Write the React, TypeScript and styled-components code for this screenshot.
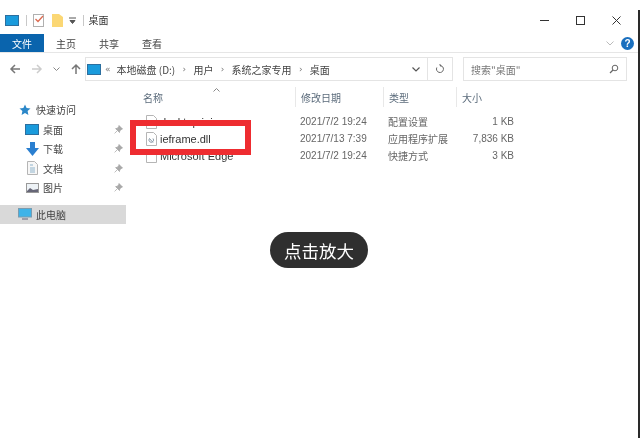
import React from "react";
import styled, { createGlobalStyle } from "styled-components";

const Global = createGlobalStyle`
  html, body { margin: 0; padding: 0; background: #fff; }
  body { font-family: "Noto Sans CJK SC", "Liberation Sans", sans-serif; }
`;
const Win = styled.div`
  position: relative; width: 640px; height: 438px; overflow: hidden; background: #fff;
  color: #333; font-size: 10px; filter: blur(0.35px);
`;
const EdgeLine = styled.div`
  position: absolute; right: 0; top: 10px; bottom: 0; width: 2px; background: #2a2a2a;
`;
const TitleBar = styled.div`
  height: 34px; display: flex; align-items: flex-end; padding: 0 0 7px 5px; box-sizing: border-box;
`;
const QuickIcons = styled.div`display: flex; align-items: center; gap: 6.5px; height: 14px;`;
const Sep = styled.div`width: 1px; height: 11px; background: #c8c8c8;`;
const TitleText = styled.span`margin-left: 5px; font-size: 10px; line-height: 14px; color: #333;`;
const WinButtons = styled.div`
  margin-left: auto; display: flex; align-items: center; gap: 27px; padding-right: 19px; height: 14px;
`;
const Ribbon = styled.div`
  height: 19px; box-sizing: border-box; display: flex; align-items: stretch; border-bottom: 1px solid #e6e6e6;
`;
const FileTab = styled.div`
  width: 44px; background: #0a64ad; color: #fff; display: flex; align-items: center; justify-content: center;
  font-size: 10px;
`;
const Tab = styled.div<{ $w: number }>`
  width: ${p => p.$w}px; display: flex; align-items: center; justify-content: center; font-size: 10px; color: #444;
`;
const RibbonEnd = styled.div`
  margin-left: auto; display: flex; align-items: center; gap: 7px; padding-right: 6px;
`;
const Help = styled.div`
  width: 13px; height: 13px; border-radius: 50%; background: #1a6fbe; color: #fff; font-size: 10px; font-weight: 700;
  display: flex; align-items: center; justify-content: center; font-family: "Liberation Sans", sans-serif;
`;
const NavRow = styled.div`
  height: 32px; display: flex; align-items: center; padding: 0 12px 0 9px; box-sizing: border-box;
`;
const NavButtons = styled.div`display: flex; align-items: center; gap: 10px; width: 76px;`;
const AddressBox = styled.div`
  width: 368px; height: 24px; border: 1px solid #e4e4e4; display: flex; align-items: center; box-sizing: border-box;
  padding-left: 1px; font-size: 10px; color: #444;
`;
const Crumb = styled.span`white-space: nowrap;`;
const Chev = styled.span<{ $first?: boolean }>`
  color: #777; font-size: 9px; margin: ${p => (p.$first ? "0 6px 0 4px" : "0 7.3px")}; font-family: "DejaVu Sans", sans-serif;
`;
const AddrEnd = styled.div`margin-left: auto; display: flex; align-items: center; height: 100%;`;
const AddrBtn = styled.div<{ $w: number; $line?: boolean }>`
  width: ${p => p.$w}px; height: 100%; display: flex; align-items: center; justify-content: center;
  border-left: ${p => (p.$line ? "1px solid #e4e4e4" : "0")};
`;
const SearchBox = styled.div`
  margin-left: 10px; width: 164px; height: 24px; border: 1px solid #e4e4e4; box-sizing: border-box;
  display: flex; align-items: center; justify-content: space-between; padding: 0 7px; font-size: 10px; color: #777;
`;
const Main = styled.div`display: flex; padding-top: 2px;`;
const Side = styled.div`width: 130px; padding-top: 13px; flex: none;`;
const SideRow = styled.div<{ $sel?: boolean; $indent: number }>`
  height: 19.5px; display: flex; align-items: center; padding-left: ${p => p.$indent}px; padding-right: 3px;
  gap: 4px; background: ${p => (p.$sel ? "#d9d9d9" : "transparent")}; font-size: 10px; color: #444;
  margin-right: 4px;
`;
const IconSlot = styled.div`width: 14px; height: 14px; display: flex; align-items: center; justify-content: center; flex: none;`;
const Pin = styled.div`margin-left: auto; display: flex;`;
const SideGap = styled.div`height: 7px;`;
const List = styled.div`flex: 1; position: relative;`;
const Header = styled.div`
  height: 20px; display: flex; font-size: 10px; color: #5b6b7b; padding-left: 8px; box-sizing: border-box;
`;
const HCell = styled.div<{ $w: number; $line?: boolean }>`
  width: ${p => p.$w}px; flex: none; display: flex; align-items: center; box-sizing: border-box; padding-left: 5px;
  border-left: ${p => (p.$line ? "1px solid #e8e8e8" : "0")};
`;
const SortMark = styled.div`position: absolute; left: 83px; top: 1px; display: flex;`;
const Rows = styled.div`padding-top: 6px;`;
const Row = styled.div`height: 17px; display: flex; font-size: 10px; color: #666; padding-left: 8px;`;
const NameCell = styled.div`
  width: 157px; flex: none; display: flex; align-items: center; gap: 3px; padding-left: 8px; box-sizing: border-box;
  color: #333; font-family: "Liberation Sans", sans-serif; font-size: 11px;
`;
const DateCell = styled.div`
  width: 88px; flex: none; padding-left: 5px; display: flex; align-items: center; box-sizing: border-box;
  font-family: "Liberation Sans", sans-serif; font-size: 10px; white-space: nowrap;
`;
const TypeCell = styled.div`
  width: 73px; flex: none; padding-left: 5px; display: flex; align-items: center; box-sizing: border-box; white-space: nowrap;
`;
const SizeCell = styled.div`
  width: 58px; flex: none; display: flex; align-items: center; justify-content: flex-end; white-space: nowrap;
  font-family: "Liberation Sans", sans-serif; font-size: 10px;
`;
const RedBox = styled.div`
  position: absolute; left: 130px; top: 120px; width: 121px; height: 35px; box-sizing: border-box; border: 6px solid #ee2c30;
`;
const Toast = styled.div`
  position: absolute; left: 270px; top: 232px; width: 98px; height: 36px; border-radius: 18px; background: #2f2f2f;
  color: #fff; font-size: 17.5px; display: flex; align-items: center; justify-content: center;
`;

const Monitor = ({ w = 14, h = 11 }: { w?: number; h?: number }) => (
  <svg width={w} height={h} viewBox="0 0 14 11">
    <rect x="0.5" y="0.5" width="13" height="10" fill="#1a9bdc" stroke="#2c6f9f" />
  </svg>
);
const FileIcon = ({ gear }: { gear?: boolean }) => (
  <svg width="11" height="14" viewBox="0 0 11 14">
    <path d="M.5.5h7l3 3v10H.5z" fill="#fff" stroke="#b5b5b5" />
    {gear && <path d="M3.5 6.500l3.500 4M7 6.500a2.300 2.300 0 1 1-3.500 0" fill="none" stroke="#8a9aa8" />}
  </svg>
);
const DocIcon = () => (
  <svg width="11" height="14" viewBox="0 0 11 14">
    <path d="M.5.5h7l3 3v10H.5z" fill="#f7f7f7" stroke="#b5b5b5" />
    <path d="M3 4h3M3 7h5M3 9h5M3 11h5" stroke="#8fb4cc" />
  </svg>
);
const PinIcon = () => (
  <svg width="9" height="9" viewBox="0 0 9 9">
    <path d="M5 .5l3.500 3.500-1.200.4-1.600 1.600-.2 1.500L1.600 3.600l1.500-.2 1.600-1.600zM3 6L.6 8.400" fill="#a9a9a9" stroke="#a0a0a0" strokeWidth=".7" />
  </svg>
);
const Arrow = ({ d, c }: { d: string; c: string }) => (
  <svg width="12" height="12" viewBox="0 0 12 12"><path d={d} fill="none" stroke={c} strokeWidth="1.500" /></svg>
);

export default function App() {
  return (
    <Win>
      <Global />
      <TitleBar>
        <QuickIcons>
          <Monitor />
          <Sep />
          <svg width="12" height="14" viewBox="0 0 12 14">
            <rect x=".5" y="1.500" width="10" height="12" fill="#fff" stroke="#b0b0b0" />
            <path d="M2.500 6l2.500 2.500L10 3" fill="none" stroke="#dc6a50" strokeWidth="1.300" />
          </svg>
          <svg width="11" height="14" viewBox="0 0 11 14"><path d="M0 1h7l4 3v10H0z" fill="#fbd774" /></svg>
          <svg width="7" height="7" viewBox="0 0 7 7"><path d="M0 1h7M1 3.500h5L3.500 6.500z" stroke="#555" fill="#555" /></svg>
          <Sep />
        </QuickIcons>
        <TitleText>桌面</TitleText>
        <WinButtons>
          <svg width="9" height="9" viewBox="0 0 9 9"><path d="M0 4.500h9" stroke="#333" /></svg>
          <svg width="9" height="9" viewBox="0 0 9 9"><rect x=".5" y=".5" width="8" height="8" fill="none" stroke="#333" /></svg>
          <svg width="9" height="9" viewBox="0 0 9 9"><path d="M.5.5l8 8M8.500.5l-8 8" stroke="#333" /></svg>
        </WinButtons>
      </TitleBar>
      <Ribbon>
        <FileTab>文件</FileTab>
        <Tab $w={44}>主页</Tab>
        <Tab $w={42}>共享</Tab>
        <Tab $w={44}>查看</Tab>
        <RibbonEnd>
          <svg width="8" height="5" viewBox="0 0 8 5"><path d="M.5.5L4 4 7.500.5" fill="none" stroke="#bbb" /></svg>
          <Help>?</Help>
        </RibbonEnd>
      </Ribbon>
      <NavRow>
        <NavButtons>
          <Arrow d="M11 6H2M6 2L2 6l4 4" c="#777" />
          <Arrow d="M1 6h9M6 2l4 4-4 4" c="#ccc" />
          <svg width="7" height="5" viewBox="0 0 7 5"><path d="M.5.5l3 3 3-3" fill="none" stroke="#888" /></svg>
          <Arrow d="M6 11V2M2 6l4-4 4 4" c="#777" />
        </NavButtons>
        <AddressBox>
          <Monitor />
          <Chev $first>«</Chev>
          <Crumb>本地磁盘 (D:)</Crumb>
          <Chev>›</Chev>
          <Crumb>用户</Crumb>
          <Chev>›</Chev>
          <Crumb>系统之家专用</Crumb>
          <Chev>›</Chev>
          <Crumb>桌面</Crumb>
          <AddrEnd>
            <AddrBtn $w={22}>
              <svg width="8" height="5" viewBox="0 0 8 5"><path d="M.5.500L4 4 7.500.5" fill="none" stroke="#555" strokeWidth="1.200" /></svg>
            </AddrBtn>
            <AddrBtn $w={24} $line>
              <svg width="10" height="10" viewBox="0 0 10 10"><path d="M5 1.500a3.500 3.500 0 1 1-3.200 2M5 1.500V0M5 1.500l1.500 1" fill="none" stroke="#666" /></svg>
            </AddrBtn>
          </AddrEnd>
        </AddressBox>
        <SearchBox>
          搜索"桌面"
          <svg width="10" height="10" viewBox="0 0 10 10"><circle cx="6" cy="4" r="2.800" fill="none" stroke="#666" /><path d="M4 6L1 9" stroke="#666" strokeWidth="1.300" /></svg>
        </SearchBox>
      </NavRow>
      <Main>
        <Side>
          <SideRow $indent={18}>
            <IconSlot>
              <svg width="12" height="12" viewBox="0 0 12 12"><path d="M6 .5l1.600 3.600 3.900.4-2.900 2.600.8 3.900L6 9l-3.400 2 .8-3.900L.5 4.500l3.900-.4z" fill="#2b87c8" /></svg>
            </IconSlot>
            快速访问
          </SideRow>
          <SideRow $indent={25}><IconSlot><Monitor /></IconSlot>桌面<Pin><PinIcon /></Pin></SideRow>
          <SideRow $indent={25}>
            <IconSlot>
              <svg width="13" height="14" viewBox="0 0 13 14"><path d="M4 0h5v6h4l-6.500 8L0 6h4z" fill="#2a7fd0" /></svg>
            </IconSlot>下载<Pin><PinIcon /></Pin>
          </SideRow>
          <SideRow $indent={25}><IconSlot><DocIcon /></IconSlot>文档<Pin><PinIcon /></Pin></SideRow>
          <SideRow $indent={25}>
            <IconSlot>
              <svg width="13" height="10" viewBox="0 0 13 10"><rect x=".5" y=".5" width="12" height="9" fill="#eef3f7" stroke="#999" /><path d="M1 8l3-3 3 2 5-1v3H1z" fill="#667" /></svg>
            </IconSlot>图片<Pin><PinIcon /></Pin>
          </SideRow>
          <SideGap />
          <SideRow $sel $indent={18}>
            <IconSlot><svg width="14" height="12" viewBox="0 0 14 12"><rect x=".5" y=".5" width="13" height="8.500" fill="#3fb3e8" stroke="#7a9cb0" /><path d="M4 11h6" stroke="#889" strokeWidth="1.500" /></svg></IconSlot>
            此电脑
          </SideRow>
        </Side>
        <List>
          <SortMark>
            <svg width="7" height="4" viewBox="0 0 7 4"><path d="M.5 3.500l3-3 3 3" fill="none" stroke="#888" /></svg>
          </SortMark>
          <Header>
            <HCell $w={157}>名称</HCell>
            <HCell $w={88} $line>修改日期</HCell>
            <HCell $w={73} $line>类型</HCell>
            <HCell $w={64} $line>大小</HCell>
          </Header>
          <Rows>
            <Row>
              <NameCell><FileIcon />desktop.ini</NameCell>
              <DateCell>2021/7/2 19:24</DateCell><TypeCell>配置设置</TypeCell><SizeCell>1 KB</SizeCell>
            </Row>
            <Row>
              <NameCell><FileIcon gear />ieframe.dll</NameCell>
              <DateCell>2021/7/13 7:39</DateCell><TypeCell>应用程序扩展</TypeCell><SizeCell>7,836 KB</SizeCell>
            </Row>
            <Row>
              <NameCell><FileIcon />Microsoft Edge</NameCell>
              <DateCell>2021/7/2 19:24</DateCell><TypeCell>快捷方式</TypeCell><SizeCell>3 KB</SizeCell>
            </Row>
          </Rows>
        </List>
      </Main>
      <RedBox />
      <Toast>点击放大</Toast>
      <EdgeLine />
    </Win>
  );
}
